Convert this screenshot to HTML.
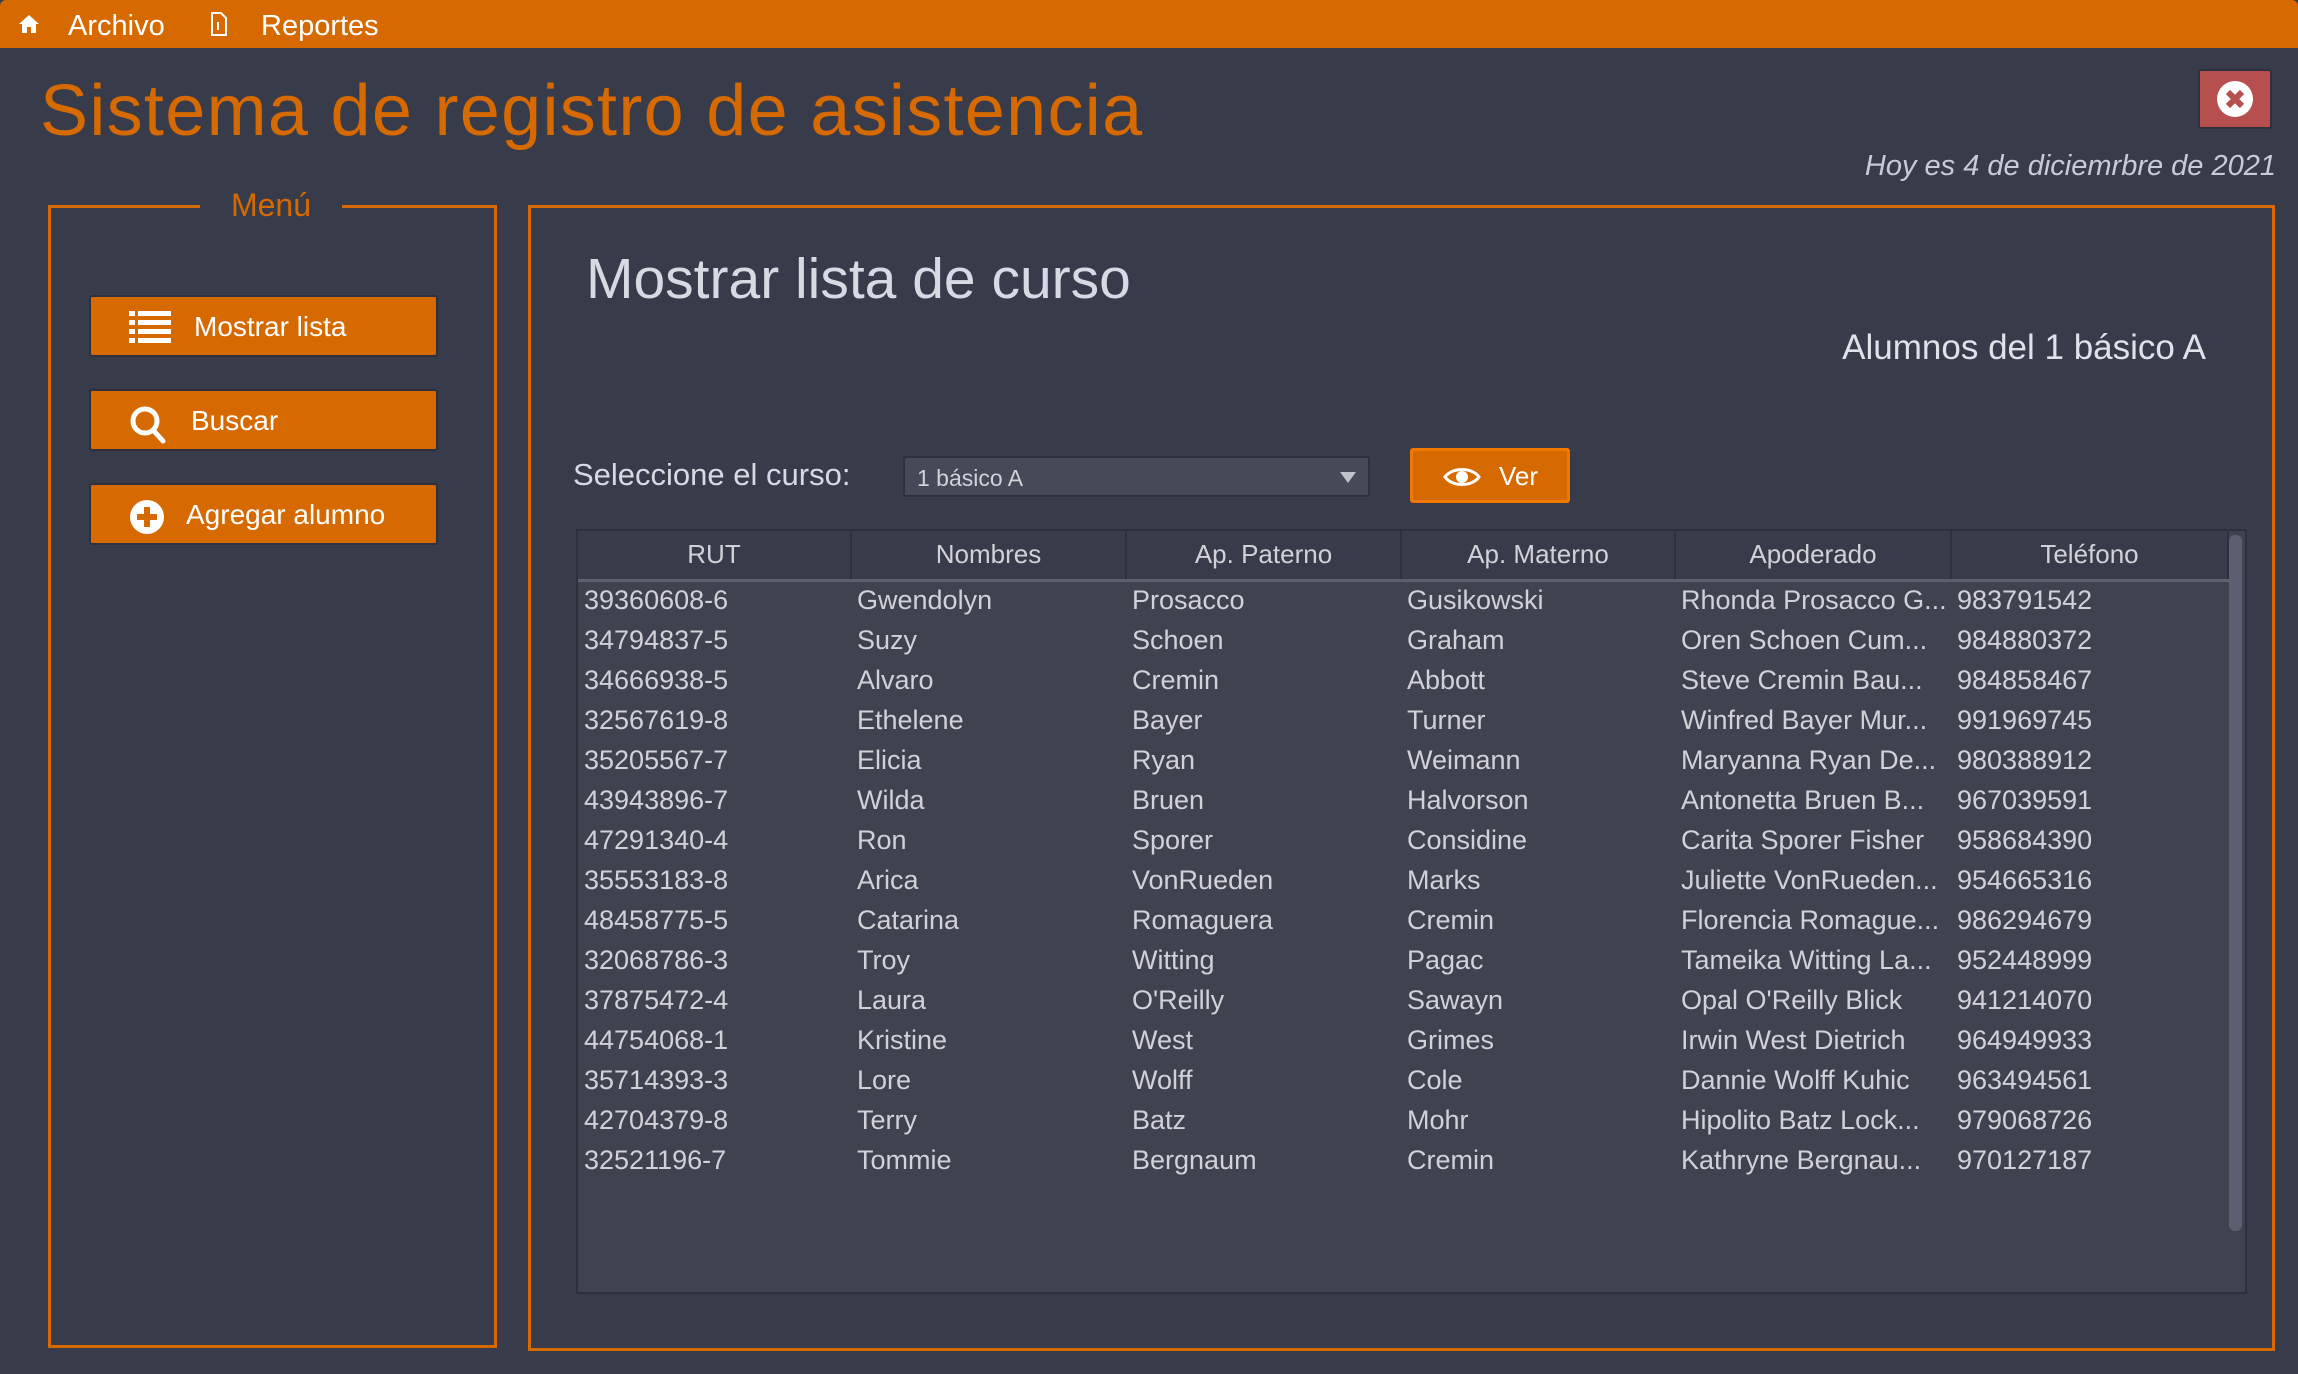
<!DOCTYPE html>
<html><head><meta charset="utf-8"><style>
*{margin:0;padding:0;box-sizing:border-box}
body{width:2298px;height:1374px;background:#383b4a;font-family:"Liberation Sans",sans-serif;position:relative;overflow:hidden;color:#d6d8e0}
.abs{position:absolute}
.menubar{left:0;top:0;width:2298px;height:48px;background:#d66a00;border-radius:6px 6px 0 0}
.menubar span{position:absolute;top:10px;font-size:29px;color:#fff}
.title{left:40px;top:70px;font-size:72px;color:#d66a00;white-space:nowrap;letter-spacing:1.3px}
.close{left:2198px;top:69px;width:74px;height:60px;background:#b5504f;border:2px solid #2e303b;border-radius:3px}
.date{right:22px;top:150px;font-size:29px;font-style:italic;color:#c8cbd6;white-space:nowrap}
.box{border:3px solid #d66a00}
.legend{left:200px;top:187px;width:142px;text-align:center;background:#383b4a;color:#d66a00;font-size:32px}
.btn{left:89px;width:349px;height:62px;background:#d66a00;border:2px solid #2e303b;border-radius:3px;color:#fff;font-size:28px}
.btn svg{position:absolute;left:38px;top:14px}
.btn span{position:absolute;left:103px;top:14px}
.h1{left:586px;top:246px;font-size:57px;color:#d8dae3}
.h2{right:92px;top:328px;font-size:35px;color:#e0e2ea}
.lbl{left:573px;top:457px;font-size:31px;color:#d8dae3}
.combo{left:903px;top:456px;width:467px;height:41px;background:#464a58;border:2px solid #2e303b;border-radius:3px;font-size:23px;color:#d0d2d8;padding:7px 12px}
.ver{left:1410px;top:448px;width:160px;height:55px;background:#d66a00;border:3px solid #f07800;border-radius:3px;color:#fff;font-size:26px}
table{border-collapse:collapse;table-layout:fixed}
.tbl{left:576px;top:529px;width:1671px;height:765px;background:#3f4350;border:2px solid #2e303b}
th{height:49px;background:#383b4a;font-weight:normal;font-size:26px;color:#d0d2d8;border-right:2px solid #2e303b;border-bottom:3px solid #5c606c}
td{height:40px;font-size:27px;color:#d0d2d8;padding-left:6px;white-space:nowrap;overflow:hidden}
.sb{left:2229px;top:535px;width:13px;height:696px;background:#5a6070;border-radius:6px}
</style></head><body>
<div class="abs menubar">
<svg class="abs" style="left:18px;top:14px" width="22" height="20" viewBox="0 0 22 20"><path d="M11 1L1 10h3v9h5v-6h4v6h5v-9h3z" fill="#fff"/></svg>
<span style="left:68px">Archivo</span>
<svg class="abs" style="left:210px;top:12px" width="18" height="24" viewBox="0 0 18 24"><path d="M2 1h9l5 5v17H2z" fill="none" stroke="#fff" stroke-width="2"/><path d="M8 10v8" stroke="#fff" stroke-width="2"/></svg>
<span style="left:261px">Reportes</span>
</div>
<div class="abs title">Sistema de registro de asistencia</div>
<div class="abs close"><svg class="abs" style="left:15px;top:8px" width="40" height="40" viewBox="0 0 40 40"><circle cx="20" cy="20" r="18" fill="#fff"/><path d="M13 13l14 14M27 13L13 27" stroke="#b5504f" stroke-width="6"/></svg></div>
<div class="abs date">Hoy es 4 de diciemrbre de 2021</div>

<div class="abs box" style="left:48px;top:205px;width:449px;height:1143px"></div>
<div class="abs legend">Menú</div>
<div class="abs btn" style="top:295px"><svg width="42" height="32" viewBox="0 0 42 32"><g fill="#fff"><rect x="0" y="0" width="6" height="5"/><rect x="9" y="0" width="33" height="5"/><rect x="0" y="9" width="6" height="5"/><rect x="9" y="9" width="33" height="5"/><rect x="0" y="18" width="6" height="5"/><rect x="9" y="18" width="33" height="5"/><rect x="0" y="27" width="6" height="5"/><rect x="9" y="27" width="33" height="5"/></g></svg><span>Mostrar lista</span></div>
<div class="abs btn" style="top:389px"><svg width="40" height="40" viewBox="0 0 40 40"><circle cx="16" cy="16" r="12" fill="none" stroke="#fff" stroke-width="5"/><path d="M24 25l10 11" stroke="#fff" stroke-width="5" stroke-linecap="round"/></svg><span style="left:100px">Buscar</span></div>
<div class="abs btn" style="top:483px"><svg width="36" height="36" viewBox="0 0 36 36"><circle cx="18" cy="18" r="17" fill="#fff"/><path d="M18 8v20M8 18h20" stroke="#d66a00" stroke-width="6"/></svg><span style="left:95px">Agregar alumno</span></div>

<div class="abs box" style="left:528px;top:205px;width:1747px;height:1146px"></div>
<div class="abs h1">Mostrar lista de curso</div>
<div class="abs h2">Alumnos del 1 básico A</div>
<div class="abs lbl">Seleccione el curso:</div>
<div class="abs combo">1 básico A<svg class="abs" style="right:12px;top:14px" width="16" height="12" viewBox="0 0 16 12"><path d="M0 0h16L8 11z" fill="#c0c3cc"/></svg></div>
<div class="abs ver"><svg class="abs" style="left:30px;top:14px" width="38" height="24" viewBox="0 0 38 24"><path d="M2 12C9 2 29 2 36 12C29 22 9 22 2 12z" fill="none" stroke="#fff" stroke-width="3"/><circle cx="19" cy="12" r="6" fill="#fff"/></svg><span class="abs" style="left:86px;top:10px">Ver</span></div>

<div class="abs tbl">
<table style="width:1650px">
<colgroup><col style="width:273px"><col style="width:275px"><col style="width:275px"><col style="width:274px"><col style="width:276px"><col style="width:277px"></colgroup>
<tr><th>RUT</th><th>Nombres</th><th>Ap. Paterno</th><th>Ap. Materno</th><th>Apoderado</th><th>Teléfono</th></tr>
<tr><td>39360608-6</td><td>Gwendolyn</td><td>Prosacco</td><td>Gusikowski</td><td>Rhonda Prosacco G...</td><td>983791542</td></tr>
<tr><td>34794837-5</td><td>Suzy</td><td>Schoen</td><td>Graham</td><td>Oren Schoen Cum...</td><td>984880372</td></tr>
<tr><td>34666938-5</td><td>Alvaro</td><td>Cremin</td><td>Abbott</td><td>Steve Cremin Bau...</td><td>984858467</td></tr>
<tr><td>32567619-8</td><td>Ethelene</td><td>Bayer</td><td>Turner</td><td>Winfred Bayer Mur...</td><td>991969745</td></tr>
<tr><td>35205567-7</td><td>Elicia</td><td>Ryan</td><td>Weimann</td><td>Maryanna Ryan De...</td><td>980388912</td></tr>
<tr><td>43943896-7</td><td>Wilda</td><td>Bruen</td><td>Halvorson</td><td>Antonetta Bruen B...</td><td>967039591</td></tr>
<tr><td>47291340-4</td><td>Ron</td><td>Sporer</td><td>Considine</td><td>Carita Sporer Fisher</td><td>958684390</td></tr>
<tr><td>35553183-8</td><td>Arica</td><td>VonRueden</td><td>Marks</td><td>Juliette VonRueden...</td><td>954665316</td></tr>
<tr><td>48458775-5</td><td>Catarina</td><td>Romaguera</td><td>Cremin</td><td>Florencia Romague...</td><td>986294679</td></tr>
<tr><td>32068786-3</td><td>Troy</td><td>Witting</td><td>Pagac</td><td>Tameika Witting La...</td><td>952448999</td></tr>
<tr><td>37875472-4</td><td>Laura</td><td>O'Reilly</td><td>Sawayn</td><td>Opal O'Reilly Blick</td><td>941214070</td></tr>
<tr><td>44754068-1</td><td>Kristine</td><td>West</td><td>Grimes</td><td>Irwin West Dietrich</td><td>964949933</td></tr>
<tr><td>35714393-3</td><td>Lore</td><td>Wolff</td><td>Cole</td><td>Dannie Wolff Kuhic</td><td>963494561</td></tr>
<tr><td>42704379-8</td><td>Terry</td><td>Batz</td><td>Mohr</td><td>Hipolito Batz Lock...</td><td>979068726</td></tr>
<tr><td>32521196-7</td><td>Tommie</td><td>Bergnaum</td><td>Cremin</td><td>Kathryne Bergnau...</td><td>970127187</td></tr>
</table>
</div>
<div class="abs sb"></div>
</body></html>
